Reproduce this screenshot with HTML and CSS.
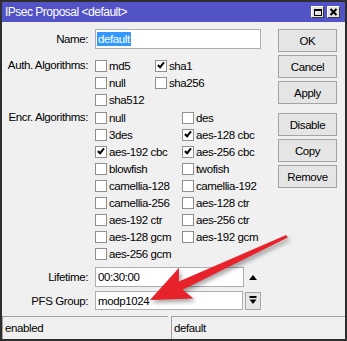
FILE: index.html
```html
<!DOCTYPE html>
<html lang="en">
<head>
  <meta charset="UTF-8">
  <title>IPsec Proposal</title>
  <link rel="stylesheet" href="styles.css">
</head>
<body>

<div class="window">
  <div class="titlebar">
    <span class="title">IPsec Proposal &lt;default&gt;</span>
    <div class="title-buttons">
      <span class="tbtn"><span class="max-icon"></span></span>
      <span class="tbtn">
        <svg width="9" height="8" viewBox="0 0 9 8"><path d="M1.5 1 L7.5 7 M7.5 1 L1.5 7" stroke="#000" stroke-width="2"/></svg>
      </span>
    </div>
  </div>

  <div class="content">
    <div class="form">
      <div class="row name-row">
        <span class="label">Name:</span>
        <div class="field name-field"><span class="selected">default</span></div>
      </div>

      <div class="row auth-row">
        <span class="label">Auth. Algorithms:</span>
        <div class="checks auth">
          <div class="check"><span class="box"></span>md5</div>
          <div class="check"><span class="box on"></span>sha1</div>
          <div class="check"><span class="box"></span>null</div>
          <div class="check"><span class="box"></span>sha256</div>
          <div class="check"><span class="box"></span>sha512</div>
        </div>
      </div>

      <div class="row encr-row">
        <span class="label">Encr. Algorithms:</span>
        <div class="checks encr">
          <div class="check"><span class="box"></span>null</div>
          <div class="check"><span class="box"></span>des</div>
          <div class="check"><span class="box"></span>3des</div>
          <div class="check"><span class="box on"></span>aes-128 cbc</div>
          <div class="check"><span class="box on"></span>aes-192 cbc</div>
          <div class="check"><span class="box on"></span>aes-256 cbc</div>
          <div class="check"><span class="box"></span>blowfish</div>
          <div class="check"><span class="box"></span>twofish</div>
          <div class="check"><span class="box"></span>camellia-128</div>
          <div class="check"><span class="box"></span>camellia-192</div>
          <div class="check"><span class="box"></span>camellia-256</div>
          <div class="check"><span class="box"></span>aes-128 ctr</div>
          <div class="check"><span class="box"></span>aes-192 ctr</div>
          <div class="check"><span class="box"></span>aes-256 ctr</div>
          <div class="check"><span class="box"></span>aes-128 gcm</div>
          <div class="check"><span class="box"></span>aes-192 gcm</div>
          <div class="check"><span class="box"></span>aes-256 gcm</div>
        </div>
      </div>

      <div class="row lifetime-row">
        <span class="label">Lifetime:</span>
        <div class="inline">
          <div class="field lifetime-field">00:30:00</div>
          <span class="up-arrow"></span>
        </div>
      </div>

      <div class="row pfs-row">
        <span class="label">PFS Group:</span>
        <div class="inline">
          <div class="field pfs-field">modp1024</div>
          <span class="drop-btn">
            <svg width="8" height="9" viewBox="0 0 8 9"><rect x="0.5" y="0" width="7" height="2" fill="#000"/><path d="M0.5 3.5 H7.5 L4 8 Z" fill="#000"/></svg>
          </span>
        </div>
      </div>
    </div>

    <div class="buttons">
      <button>OK</button>
      <button>Cancel</button>
      <button>Apply</button>
      <button class="group-start">Disable</button>
      <button>Copy</button>
      <button>Remove</button>
    </div>
  </div>

  <div class="statusbar">
    <div class="cell first">enabled</div>
    <div class="cell">default</div>
  </div>

  <svg class="arrow" width="347" height="341" viewBox="0 0 347 341">
    <path d="M150 300 L193.4 298.5 L182.7 289.7 L287.8 237.6 L286.2 235 L178.9 281.5 L179 267.7 Z" fill="#e8222a"/>
  </svg>
</div>

</body>
</html>
```

FILE: styles.css
```css
*, *::before, *::after {
  box-sizing: border-box;
}

body {
  margin: 0;
  font-family: "Liberation Sans", Arial, sans-serif;
  font-size: 11.5px;
  letter-spacing: -0.4px;
  color: #000;
  background: #ffffff;
}

.window {
  position: relative;
  width: 347px;
  height: 341px;
  border: 2px solid #2e2e2e;
  background: #f0f0f0;
  display: flex;
  flex-direction: column;
}

.titlebar {
  height: 20px;
  background: #5353c8;
  color: #fff;
  display: flex;
  align-items: center;
  justify-content: space-between;
  padding: 0 5px 0 3px;
}

.title {
  font-size: 12px;
  letter-spacing: -0.5px;
}

.title-buttons {
  display: flex;
  gap: 3px;
}

.tbtn {
  width: 13px;
  height: 12px;
  background: #e4e4e4;
  border: 1px solid;
  border-color: #fff #3a3a3a #3a3a3a #fff;
  display: flex;
  align-items: center;
  justify-content: center;
}

.max-icon {
  width: 8px;
  height: 7px;
  border: 1px solid #000;
  border-top-width: 2px;
}

.content {
  flex: 1;
  display: flex;
}

.form {
  width: 276px;
  padding-top: 7px;
}

.row {
  display: grid;
  grid-template-columns: 86px auto;
  column-gap: 7px;
  align-items: center;
}

.label {
  text-align: right;
  white-space: nowrap;
}

.auth-row, .encr-row {
  align-items: start;
}

.auth-row .label, .encr-row .label {
  line-height: 17px;
}

.auth-row {
  margin-top: 8px;
}

.encr-row {
  margin-top: 1px;
}

.lifetime-row {
  margin-top: 5px;
}

.pfs-row {
  margin-top: 4px;
}

.field {
  height: 20px;
  background: #fff;
  border: 1px solid #abadb3;
  padding-left: 2px;
  display: flex;
  align-items: center;
}

.name-field {
  width: 166px;
  padding-left: 1px;
}

.selected {
  background: #3399ff;
  color: #fff;
  padding: 1px 1px;
}

.checks {
  display: grid;
  grid-auto-rows: 17px;
}

.auth {
  grid-template-columns: 60px auto;
}

.encr {
  grid-template-columns: 87px auto;
}

.check {
  display: flex;
  align-items: center;
  white-space: nowrap;
}

.box {
  position: relative;
  width: 12px;
  height: 12px;
  margin-right: 2px;
  background: #fff;
  border: 1px solid #8e8f8f;
}

.box.on::after {
  content: "";
  position: absolute;
  left: 3px;
  top: 0;
  width: 4px;
  height: 7px;
  border-right: 2px solid #000;
  border-bottom: 2px solid #000;
  transform: rotate(40deg);
}

.inline {
  display: flex;
  align-items: center;
}

.lifetime-field {
  width: 149px;
}

.up-arrow {
  margin-left: 5px;
  width: 0;
  height: 0;
  border-left: 4px solid transparent;
  border-right: 4px solid transparent;
  border-bottom: 5px solid #000;
}

.pfs-field {
  width: 148px;
  height: 19px;
}

.drop-btn {
  margin-left: 2px;
  width: 16px;
  height: 18px;
  background: #e6e6e6;
  border: 1px solid #a5a5a5;
  display: flex;
  align-items: center;
  justify-content: center;
}

.buttons {
  width: 59px;
  padding-top: 7px;
  display: flex;
  flex-direction: column;
  gap: 3px;
}

button {
  height: 23px;
  padding: 0;
  font-family: inherit;
  font-size: 11.5px;
  letter-spacing: -0.4px;
  background: #e5e5e5;
  border: 1px solid #a3a3a3;
  color: #000;
}

.group-start {
  margin-top: 6px;
}

.statusbar {
  height: 23px;
  display: flex;
  gap: 3px;
}

.cell {
  flex: 1;
  border-top: 1px solid #a0a0a0;
  border-left: 1px solid #a0a0a0;
  padding-left: 2px;
  display: flex;
  align-items: center;
}

.cell.first {
  flex: 0 0 166px;
}

.arrow {
  position: absolute;
  left: -2px;
  top: -2px;
  pointer-events: none;
  filter: drop-shadow(2px 3px 2px rgba(0, 0, 0, 0.35));
}
```
